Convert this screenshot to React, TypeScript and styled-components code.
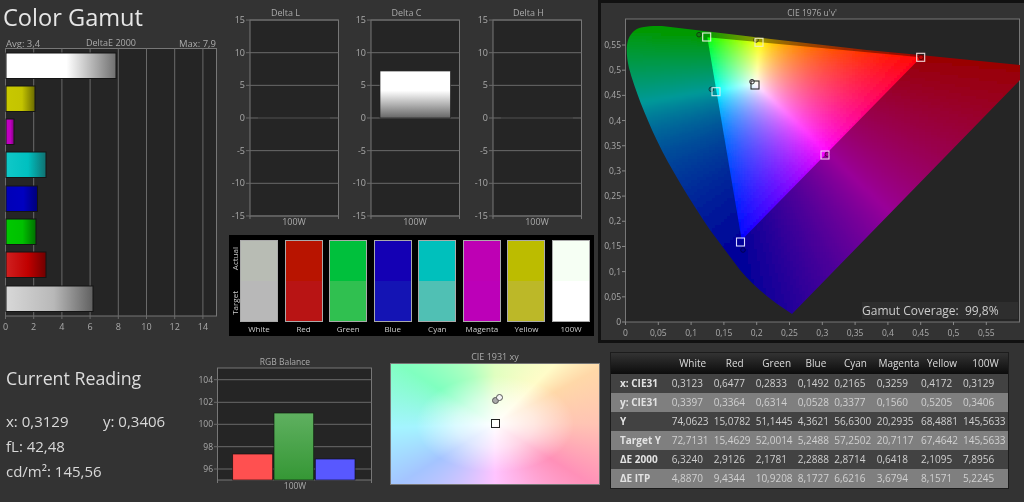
import * as React from 'react'
import styled, { createGlobalStyle } from 'styled-components'

const GlobalStyle = createGlobalStyle`
	html, body {
		margin: 0;
		background: #333;
	}
`

const FONT = `"Open Sans", "Noto Sans", "Liberation Sans", sans-serif`
const AXIS = '#aaa'
const GRID = '#6a6a6a'
const PLOT = '#252525'

// gamut triangle in page pixels, read off the picture
const RED = [921, 57.3]
const GREEN = [707.3, 37.3]
const BLUE = [741.7, 240]
const WHITE = [756, 84]

const bary = (x: number, y: number) => {
	const d = (GREEN[1] - BLUE[1]) * (RED[0] - BLUE[0]) + (BLUE[0] - GREEN[0]) * (RED[1] - BLUE[1])
	const a = ((GREEN[1] - BLUE[1]) * (x - BLUE[0]) + (BLUE[0] - GREEN[0]) * (y - BLUE[1])) / d
	const b = ((BLUE[1] - RED[1]) * (x - BLUE[0]) + (RED[0] - BLUE[0]) * (y - BLUE[1])) / d
	return [a, b, 1 - a - b]
}

const WHITE_BARY = bary(WHITE[0], WHITE[1])

const gamutColor = (x: number, y: number, dim: number) => {
	const rgb = bary(x, y).map((v, i) => Math.max(0, v / WHITE_BARY[i]))
	const max = Math.max(...rgb)
	const [r, g, b] = rgb.map(v => Math.round(255 * dim * Math.pow(Math.min(1, v / max), 0.78)))
	return `rgb(${r},${g},${b})`
}

const gamutCells = (x0: number, x1: number, y0: number, y1: number, dim: number) => {
	const out: { x: number, y: number, fill: string }[] = []
	for (let y = y0; y < y1; y += 3) {
		for (let x = x0; x < x1; x += 3) {
			out.push({ x, y, fill: gamutColor(x + 1.5, y + 1.5, dim) })
		}
	}
	return out
}

const LOCUS = 'M792 314 C775 303 755 288 740 270 L710 230 C690 200 670 168 656.7 140 C645 115 635 90 629 68 C625 50 626 38 634 31 C640 26 650 26 662 26 L750 36.6 L866.7 50 L920 55 L1020 65 L1020 80 Z'

const DELTA_E_BARS = [
	{ id: 'w', y: 53, end: 116, light: '#ffffff', mid: '#ffffff', dark: '#707070' },
	{ id: 'y', y: 86, end: 35, light: '#c8c800', mid: '#c4c400', dark: '#6a6a00' },
	{ id: 'm', y: 119, end: 14, light: '#c000c0', mid: '#c000c0', dark: '#800080' },
	{ id: 'c', y: 152, end: 46, light: '#10c8c8', mid: '#00c0c0', dark: '#107070' },
	{ id: 'b', y: 186, end: 37.5, light: '#0000b8', mid: '#0000c0', dark: '#000078' },
	{ id: 'g', y: 219, end: 36, light: '#00c800', mid: '#00c000', dark: '#007000' },
	{ id: 'r', y: 252, end: 46, light: '#d02020', mid: '#c00000', dark: '#700000' },
	{ id: 'a', y: 286, end: 93, light: '#d8d8d8', mid: '#b8b8b8', dark: '#606060' }
]

const DELTA_TICKS = [15, 10, 5, 0, -5, -10, -15]

const SWATCHES = [
	{ name: 'White', actual: '#b8bcb4', target: '#b8b8b8' },
	{ name: 'Red', actual: '#b81400', target: '#b81414' },
	{ name: 'Green', actual: '#00c03c', target: '#30c050' },
	{ name: 'Blue', actual: '#1400b4', target: '#1414b4' },
	{ name: 'Cyan', actual: '#00c0bc', target: '#50c0b4' },
	{ name: 'Magenta', actual: '#be00b4', target: '#bc00b8' },
	{ name: 'Yellow', actual: '#bcbc00', target: '#bcb828' },
	{ name: '100W', actual: '#f6fff4', target: '#ffffff' }
]

const TABLE_HEAD = ['', 'White', 'Red', 'Green', 'Blue', 'Cyan', 'Magenta', 'Yellow', '100W']

const TABLE_ROWS = [
	['x: CIE31', '0,3123', '0,6477', '0,2833', '0,1492', '0,2165', '0,3259', '0,4172', '0,3129'],
	['y: CIE31', '0,3397', '0,3364', '0,6314', '0,0528', '0,3377', '0,1560', '0,5205', '0,3406'],
	['Y', '74,0623', '15,0782', '51,1445', '4,3621', '56,6300', '20,2935', '68,4881', '145,5633'],
	['Target Y', '72,7131', '15,4629', '52,0014', '5,2488', '57,2502', '20,7117', '67,4642', '145,5633'],
	['ΔE 2000', '6,3240', '2,9126', '2,1781', '2,2888', '2,8714', '0,6418', '2,1095', '7,8956'],
	['ΔE ITP', '4,8870', '9,4344', '10,9208', '8,1727', '6,6216', '3,6794', '8,1571', '5,2245']
]

const GAMUT_TARGETS = [
	{ x: 706.7, y: 37, stroke: '#e8f0e0' },
	{ x: 759, y: 42.3, stroke: '#f0f0c0' },
	{ x: 716, y: 91.7, stroke: '#d0f0f0' },
	{ x: 755, y: 85, stroke: '#2a2a2a' },
	{ x: 825, y: 155, stroke: '#f0d0f0' },
	{ x: 920.7, y: 57.3, stroke: '#f0d8d8' },
	{ x: 740.5, y: 242, stroke: '#d8d8ff' }
]

const GAMUT_ACTUALS = [
	{ x: 699, y: 34.7, fill: '#108010', stroke: '#104010' },
	{ x: 756, y: 40, fill: '#a0a020', stroke: '#404010' },
	{ x: 711.3, y: 89.3, fill: '#108080', stroke: '#104040' },
	{ x: 752, y: 81.7, fill: '#ffffff', stroke: '#333333' },
	{ x: 827.3, y: 154.3, fill: '#b000a0', stroke: '#500050' },
	{ x: 921, y: 57.3, fill: '#c00000', stroke: '#600000' },
	{ x: 743, y: 250, fill: '#000090', stroke: '#000050' }
]

const DeltaEChart = () => {
	const ticks = [0, 2, 4, 6, 8, 10, 12, 14]
	return (
		<LeftChart viewBox="0 36 229 304">
			<defs>
				{DELTA_E_BARS.map(bar => (
					<linearGradient key={bar.id} id={`de-${bar.id}`}>
						<stop offset="0" stopColor={bar.light} />
						<stop offset="0.55" stopColor={bar.mid} />
						<stop offset="1" stopColor={bar.dark} />
					</linearGradient>
				))}
			</defs>
			<text x="6" y="47" fill={AXIS} fontSize="9.5">Avg: 3,4</text>
			<text x="111" y="46" fill={AXIS} fontSize="9" textAnchor="middle">DeltaE 2000</text>
			<text x="216" y="47" fill={AXIS} fontSize="9.5" textAnchor="end">Max: 7,9</text>
			<rect x="5.5" y="48.5" width="211" height="267.5" fill={PLOT} stroke="#777" />
			{ticks.map(t => {
				const x = 5.5 + t * 14.1
				return (
					<g key={t}>
						<line x1={x} x2={x} y1="48.5" y2="319" stroke={GRID} />
						<text x={x} y="330" fill={AXIS} fontSize="9" textAnchor="middle">{t}</text>
					</g>
				)
			})}
			{DELTA_E_BARS.map(bar => (
				<rect
					key={bar.id}
					x="6"
					y={bar.y}
					width={bar.end - 6}
					height="25.5"
					fill={`url(#de-${bar.id})`}
					stroke="#151515"
				/>
			))}
		</LeftChart>
	)
}

const DeltaChart = ({ title, value }: { title: string, value?: number }) => {
	const yOf = (v: number) => 118 - v * 6.53
	return (
		<DeltaSvg viewBox="0 0 121.3 230">
			<defs>
				<linearGradient id="delta-bar" x1="0" y1="0" x2="0" y2="1">
					<stop offset="0" stopColor="#ffffff" />
					<stop offset="0.42" stopColor="#ffffff" />
					<stop offset="1" stopColor="#666666" />
				</linearGradient>
			</defs>
			<text x="56.5" y="16" fill={AXIS} fontSize="9" textAnchor="middle">{title}</text>
			<rect x="21" y="20" width="88.5" height="196" fill={PLOT} stroke="#777" />
			{DELTA_TICKS.map(t => (
				<g key={t}>
					<line x1="17" x2="109.5" y1={yOf(t)} y2={yOf(t)} stroke={GRID} />
					<text x="16" y={yOf(t) + 3} fill={AXIS} fontSize="9" textAnchor="end">{t}</text>
				</g>
			))}
			<line x1="21" x2="21" y1="216" y2="219" stroke="#777" />
			<line x1="109.5" x2="109.5" y1="216" y2="219" stroke="#777" />
			{value === undefined
				? <line x1="29" x2="101" y1="118" y2="118" stroke="#2e2e2e" />
				: <rect x="30" y={yOf(value)} width="70.5" height={value * 6.53} fill="url(#delta-bar)" stroke="#222" strokeWidth="0.7" />}
			<text x="65" y="225" fill={AXIS} fontSize="9" textAnchor="middle">100W</text>
		</DeltaSvg>
	)
}

const GamutChart = () => {
	const outer = React.useMemo(() => gamutCells(625, 1024, 24, 316, 0.6), [])
	const inner = React.useMemo(() => gamutCells(705, 924, 36, 243, 1), [])
	const ticks = ['0', '0,05', '0,1', '0,15', '0,2', '0,25', '0,3', '0,35', '0,4', '0,45', '0,5', '0,55']
	return (
		<GamutSvg viewBox="601 3 423 337">
			<defs>
				<clipPath id="locus"><path d={LOCUS} /></clipPath>
				<clipPath id="gamut">
					<polygon points={[RED, GREEN, BLUE].map(p => p.join(',')).join(' ')} />
				</clipPath>
				<filter id="soften" x="0" y="0" width="1" height="1">
					<feGaussianBlur stdDeviation="0.9" />
				</filter>
			</defs>
			<text x="812" y="16" fill={AXIS} fontSize="8.5" textAnchor="middle">CIE 1976 u'v'</text>
			<rect x="625.5" y="19" width="394" height="303" fill={PLOT} stroke="#777" />
			<g clipPath="url(#locus)">
				<g filter="url(#soften)">
					{outer.map(c => (
						<rect key={`${c.x}-${c.y}`} x={c.x} y={c.y} width="3.2" height="3.2" fill={c.fill} />
					))}
				</g>
			</g>
			<g clipPath="url(#gamut)">
				<g filter="url(#soften)">
					{inner.map(c => (
						<rect key={`${c.x}-${c.y}`} x={c.x} y={c.y} width="3.2" height="3.2" fill={c.fill} />
					))}
				</g>
			</g>
			{ticks.map((t, i) => {
				const x = 625.5 + i * 32.8
				return (
					<g key={t}>
						<line x1={x} x2={x} y1="322" y2="325" stroke="#888" />
						<text x={x} y="336" fill={AXIS} fontSize="8.5" textAnchor="middle">{t}</text>
					</g>
				)
			})}
			{ticks.map((t, i) => {
				const y = 322 - i * 25.18
				return (
					<g key={t}>
						<line x1="622" x2="625.5" y1={y} y2={y} stroke="#888" />
						<text x="621" y={y + 3} fill={AXIS} fontSize="8.5" textAnchor="end">{t}</text>
					</g>
				)
			})}
			{GAMUT_ACTUALS.map(m => (
				<circle key={m.x} cx={m.x} cy={m.y} r="2.3" fill={m.fill} stroke={m.stroke} />
			))}
			{GAMUT_TARGETS.map(m => (
				<rect key={m.x} x={m.x - 4} y={m.y - 4} width="8" height="8" fill="none" stroke={m.stroke} strokeWidth="1.1" />
			))}
		</GamutSvg>
	)
}

const BalanceChart = () => {
	const ticks = [
		{ label: '104', y: 379.7 },
		{ label: '102', y: 402.3 },
		{ label: '100', y: 424.3 },
		{ label: '98', y: 446.7 },
		{ label: '96', y: 469 }
	]
	return (
		<BalanceSvg viewBox="195 345 185 157">
			<defs>
				<linearGradient id="balance-green" x1="0" y1="0" x2="0" y2="1">
					<stop offset="0" stopColor="#5fb060" />
					<stop offset="1" stopColor="#359735" />
				</linearGradient>
			</defs>
			<text x="285" y="365" fill={AXIS} fontSize="8.5" textAnchor="middle">RGB Balance</text>
			<rect x="217.5" y="368" width="154" height="112" fill={PLOT} stroke="#777" />
			{ticks.map(t => (
				<g key={t.label}>
					<line x1="214" x2="371.5" y1={t.y} y2={t.y} stroke={GRID} />
					<text x="213" y={t.y + 3} fill={AXIS} fontSize="8.5" textAnchor="end">{t.label}</text>
				</g>
			))}
			<rect x="232.7" y="454" width="40" height="26" fill="#ff5050" stroke="#201010" strokeWidth="0.7" />
			<rect x="274" y="413" width="39.7" height="67" fill="url(#balance-green)" stroke="#102010" strokeWidth="0.7" />
			<rect x="315.3" y="459" width="39.7" height="21" fill="#5858ff" stroke="#101030" strokeWidth="0.7" />
			<line x1="217.5" x2="217.5" y1="480" y2="483" stroke="#777" />
			<line x1="371.5" x2="371.5" y1="480" y2="483" stroke="#777" />
			<text x="295" y="488.5" fill={AXIS} fontSize="8.5" textAnchor="middle">100W</text>
		</BalanceSvg>
	)
}

export default function App() {
	return (
		<Page>
			<GlobalStyle />
			<TopRow>
				<LeftColumn>
					<Title>Color Gamut</Title>
					<DeltaEChart />
				</LeftColumn>
				<MiddleColumn>
					<DeltaRow>
						<DeltaChart title="Delta L" />
						<DeltaChart title="Delta C" value={7.2} />
						<DeltaChart title="Delta H" />
					</DeltaRow>
					<SwatchPanel>
						<SideLabels>
							<SideLabel>Actual</SideLabel>
							<SideLabel>Target</SideLabel>
						</SideLabels>
						<SwatchRow>
							{SWATCHES.map(s => (
								<SwatchColumn key={s.name}>
									<Swatch>
										<SwatchHalf $color={s.actual} />
										<SwatchHalf $color={s.target} />
									</Swatch>
									<SwatchName>{s.name}</SwatchName>
								</SwatchColumn>
							))}
						</SwatchRow>
					</SwatchPanel>
				</MiddleColumn>
				<GamutPanel>
					<GamutChart />
					<Coverage>Gamut Coverage:&nbsp; 99,8%</Coverage>
				</GamutPanel>
			</TopRow>
			<BottomRow>
				<Reading>
					<ReadingTitle>Current Reading</ReadingTitle>
					<ReadingLine>
						<ReadingX>x: 0,3129</ReadingX>
						<span>y: 0,3406</span>
					</ReadingLine>
					<ReadingLine>fL: 42,48</ReadingLine>
					<ReadingLine>cd/m²: 145,56</ReadingLine>
				</Reading>
				<BalanceChart />
				<XyBlock>
					<XyTitle>CIE 1931 xy</XyTitle>
					<XyField>
						<XyDot $left={101} $top={33} $color="#aaa" />
						<XyDot $left={104.5} $top={30} $color="#f4f4f4" />
						<XyTarget />
					</XyField>
				</XyBlock>
				<ReadingsTable>
					<TableHead>
						{TABLE_HEAD.map((h, i) => <HeadCell key={i}>{h}</HeadCell>)}
					</TableHead>
					{TABLE_ROWS.map((row, r) => (
						<TableRow key={row[0]} $light={r % 2 === 1}>
							{row.map((cell, c) => c === 0
								? <RowLabel key={c}>{cell}</RowLabel>
								: <ValueCell key={c}>{cell}</ValueCell>)}
						</TableRow>
					))}
				</ReadingsTable>
			</BottomRow>
		</Page>
	)
}

const Page = styled.div`
	width: 1024px;
	height: 502px;
	overflow: hidden;
	background: #333;
	font-family: ${FONT};
	color: #ddd;
	filter: blur(0.4px);

	text {
		font-family: ${FONT};
	}
`

const TopRow = styled.div`
	display: flex;
	height: 345px;
`

const BottomRow = styled.div`
	display: flex;
	height: 157px;
`

const LeftColumn = styled.div`
	width: 229px;
	flex: none;
`

const Title = styled.div`
	height: 36px;
	padding-left: 3px;
	font-size: 23.6px;
	line-height: 34px;
	color: #e6e6e6;
`

const LeftChart = styled.svg`
	display: block;
	width: 229px;
	height: 304px;
`

const MiddleColumn = styled.div`
	width: 369px;
	flex: none;
`

const DeltaRow = styled.div`
	display: flex;
	height: 230px;
`

const DeltaSvg = styled.svg`
	display: block;
	width: 121.3px;
	height: 230px;
	flex: none;
`

const SwatchPanel = styled.div`
	display: flex;
	box-sizing: border-box;
	width: 365px;
	height: 101px;
	margin-top: 5px;
	padding: 5px 4px 0 0;
	background: #000;
`

const SideLabels = styled.div`
	display: flex;
	flex-direction: column;
	justify-content: space-between;
	align-items: center;
	box-sizing: border-box;
	width: 11px;
	height: 82px;
	padding: 7px 0 7px 1px;
	flex: none;
`

const SideLabel = styled.span`
	writing-mode: vertical-rl;
	transform: rotate(180deg);
	font-size: 8px;
	line-height: 8px;
	color: #ccc;
`

const SwatchRow = styled.div`
	flex: 1;
	display: flex;
	gap: 6.6px;
	min-width: 0;
`

const SwatchColumn = styled.div`
	flex: 1;
	min-width: 0;
	display: flex;
	flex-direction: column;
	align-items: stretch;
`

const Swatch = styled.div`
	display: flex;
	flex-direction: column;
	box-sizing: border-box;
	height: 82px;
	border: 1px solid #aaa;
`

const SwatchHalf = styled.div<{ $color: string }>`
	flex: 1;
	background: ${p => p.$color};
`

const SwatchName = styled.div`
	margin-top: 1px;
	font-size: 8px;
	line-height: 12px;
	text-align: center;
	color: #ccc;
`

const GamutPanel = styled.div`
	position: relative;
	width: 426px;
	height: 343px;
	flex: none;
	box-sizing: border-box;
	border: 3px solid #111;
	border-right: 0;
	background: #333;
`

const GamutSvg = styled.svg`
	display: block;
	width: 423px;
	height: 337px;
`

const Coverage = styled.div`
	position: absolute;
	right: 6px;
	bottom: 21px;
	width: 156px;
	height: 17px;
	box-sizing: border-box;
	background: #2e2e2e;
	font-size: 12px;
	line-height: 17px;
	color: #ccc;
	white-space: nowrap;
`

const Reading = styled.div`
	width: 195px;
	flex: none;
	box-sizing: border-box;
	padding: 21px 0 0 6px;
`

const ReadingTitle = styled.div`
	font-size: 17.8px;
	line-height: 24px;
	margin-bottom: 19px;
	color: #ddd;
`

const ReadingLine = styled.div`
	height: 25px;
	font-size: 15px;
	line-height: 25px;
	color: #d8d8d8;
	white-space: nowrap;
`

const ReadingX = styled.span`
	display: inline-block;
	width: 97px;
`

const BalanceSvg = styled.svg`
	display: block;
	width: 185px;
	height: 157px;
	flex: none;
`

const XyBlock = styled.div`
	width: 225px;
	flex: none;
	box-sizing: border-box;
	padding-left: 10px;
`

const XyTitle = styled.div`
	width: 210px;
	height: 18px;
	font-size: 9px;
	line-height: 24px;
	text-align: center;
	color: #aaa;
`

const XyField = styled.div`
	position: relative;
	box-sizing: border-box;
	width: 210px;
	height: 122px;
	border: 1px solid #777;
	background:
		radial-gradient(ellipse 38% 40% at 50% 50%, #fff 0%, rgba(255, 255, 255, 0.6) 50%, rgba(255, 255, 255, 0) 100%),
		conic-gradient(from 0deg at 50% 50%, #e0ffc0 0deg, #fffcc8 45deg, #ffd8a8 62deg, #ffc4b4 90deg, #ff90b8 122deg, #ffb0e4 155deg, #ffc4ff 180deg, #c8c4ff 215deg, #a4c4ff 238deg, #a4f4ff 268deg, #80ffc0 302deg, #b0ffc0 335deg, #e0ffc0 360deg);
`

const XyDot = styled.div<{ $left: number, $top: number, $color: string }>`
	position: absolute;
	left: ${p => p.$left}px;
	top: ${p => p.$top}px;
	width: 5px;
	height: 5px;
	border: 1px solid #555;
	border-radius: 50%;
	background: ${p => p.$color};
`

const XyTarget = styled.div`
	position: absolute;
	left: 100px;
	top: 55px;
	width: 7px;
	height: 7px;
	border: 1.2px solid #222;
`

const ReadingsTable = styled.div`
	width: 397px;
	flex: none;
	margin: 8px 0 0 6px;
	align-self: flex-start;
	outline: 1px solid #1c1c1c;
	font-size: 10px;
	color: #ccc;
`

const COLUMNS = '60.7px 42px 42px 42px 36.6px 42.4px 44.3px 42px 45px'

const TableHead = styled.div`
	display: grid;
	grid-template-columns: ${COLUMNS};
	height: 21px;
	line-height: 21px;
	background: linear-gradient(#333, #0c0c0c);
`

const HeadCell = styled.div`
	text-align: center;
	color: #ddd;
	white-space: nowrap;
`

const TableRow = styled.div<{ $light: boolean }>`
	display: grid;
	grid-template-columns: ${COLUMNS};
	height: 19px;
	line-height: 19px;
	background: ${p => p.$light ? '#7f7f7f' : '#424242'};
`

const RowLabel = styled.div`
	padding-left: 9px;
	font-weight: 700;
	font-size: 10px;
	color: #e2e2e2;
	white-space: nowrap;
`

const ValueCell = styled.div`
	white-space: nowrap;
	color: #d0d0d0;
`
